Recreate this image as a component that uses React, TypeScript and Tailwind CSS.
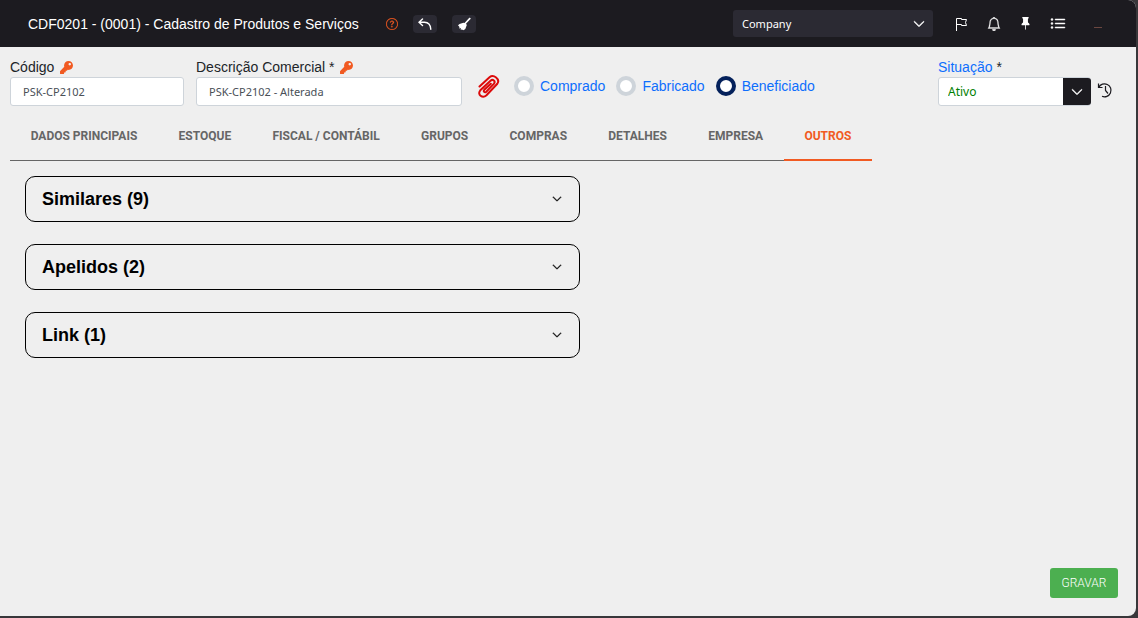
import { useState } from "react";
import { BsBell, BsChevronDown, BsListUl, BsPinFill, BsQuestionCircle } from "react-icons/bs";
import { FaKey } from "react-icons/fa";

const TABS = ["DADOS PRINCIPAIS", "ESTOQUE", "FISCAL / CONTÁBIL", "GRUPOS", "COMPRAS", "DETALHES", "EMPRESA", "OUTROS"];
const ORIGINS = ["Comprado", "Fabricado", "Beneficiado"];
const SECTIONS = ["Similares (9)", "Apelidos (2)", "Link (1)"];

function UndoIcon() {
  return (
    <svg width="14" height="12" viewBox="0 0 14 12" fill="none" stroke="currentColor" strokeWidth="1.400" strokeLinecap="round">
      <path d="M4.500 1 1 4.300l3.500 3.200M1 4.300h5.500c4 0 6 3 6.300 7" />
    </svg>
  );
}

function BroomIcon() {
  return (
    <svg width="14" height="14" viewBox="0 0 14 14" fill="currentColor">
      <path d="M12.300.8a.9.9 0 0 1 1.200 1.300L9 6.700l.8 1.200-1.500 4L6.500 13.300 1 8.500 2.500 7l4-1.300 1 .2z" />
      <path d="m1.500 7.500 5.300 5.300-3.300-.3L4 11l-2 .5.7-1.700z" />
    </svg>
  );
}

function FlagIcon() {
  return (
    <svg width="14" height="14" viewBox="0 0 14 14" fill="none" stroke="currentColor">
      <path d="M1.500 14V1.500h5v1h5L10.500 5.500l1 3H6.500v-1h-5" />
    </svg>
  );
}

function ClipIcon() {
  return (
    <svg width="22" height="23" viewBox="0 0 22 23" fill="none" stroke="#dc0a0a" strokeWidth="2" strokeLinecap="round">
      <path d="M1.500 11.500 11.500 2.300C15.500-1 22.500 4 19.300 8.800L8.500 20.300C4.500 24-1.200 19.500 2.300 15.300L12.500 5.700c2.500-2 5.300.5 3.500 3L8.300 16.700c-1.800 1.500-3.300-.3-2-1.900L12.800 8.800" />
    </svg>
  );
}

function HistoryIcon() {
  return (
    <svg width="16" height="16" viewBox="0 0 16 16" fill="none" stroke="#1c1b20" strokeWidth="1.200">
      <path d="M1.500 1.500v4h4M1.700 5.400A6.500 6.500 0 1 1 5 14.300M8.500 4v4.500l2.500 3" />
    </svg>
  );
}

export default function App() {
  const [tab, setTab] = useState("OUTROS");
  const [origin, setOrigin] = useState("Beneficiado");
  return (
    <div className="min-h-screen bg-[#38373a] pr-[2px] pb-[2px] font-['Liberation_Sans',sans-serif] text-sm text-[#212529]">
      <div className="flex min-h-[calc(100vh-2px)] flex-col overflow-hidden rounded-r-lg bg-[#efefef]">
        <header className="flex h-[47px] shrink-0 items-center bg-[#1c1b20] pr-[30px] pl-7 text-white">
          <h1>CDF0201 - (0001) - Cadastro de Produtos e Serviços</h1>
          <button aria-label="Ajuda" className="ml-[27px] text-[#f15a22]"><BsQuestionCircle size={12} strokeWidth={0.3} /></button>
          <button aria-label="Desfazer" className="ml-[15px] flex h-[18px] w-6 items-center justify-center rounded-sm bg-[#2b2a33]"><UndoIcon /></button>
          <button aria-label="Limpar" className="ml-[15px] flex h-[18px] w-6 items-center justify-center rounded-sm bg-[#2b2a33]"><BroomIcon /></button>
          <div className="relative ml-auto w-[200px]">
            <select aria-label="Empresa" className="h-[27px] w-full appearance-none rounded-[3px] bg-[#2b2a33] pl-[9px] font-['Noto_Sans',sans-serif] text-[11px] text-white">
              <option>Company</option>
            </select>
            <BsChevronDown size={12} strokeWidth={1} className="pointer-events-none absolute top-2 right-2" />
          </div>
          <nav className="ml-[22px] flex items-center gap-[18px]">
            <button aria-label="Marcadores"><FlagIcon /></button>
            <button aria-label="Notificações"><BsBell size={14} strokeWidth={0.3} /></button>
            <button aria-label="Fixar"><BsPinFill size={13} /></button>
            <button aria-label="Lista"><BsListUl size={16} strokeWidth={0.5} /></button>
            <button aria-label="Minimizar" className="ml-[6px] flex h-4 w-4 items-end justify-center pb-1"><span className="h-px w-2 bg-[#6b4740]" /></button>
          </nav>
        </header>

        <main className="flex grow flex-col px-[10px]">
          <form className="flex items-start pt-[11px] pr-[13px]">
            <div className="w-[174px]">
              <label htmlFor="codigo" className="mb-px flex h-[18px] items-center gap-[6px]">Código <FaKey size={13} className="text-[#f15a22]" /></label>
              <input id="codigo" defaultValue="PSK-CP2102" className="h-[29px] w-full rounded-[3px] border border-[#ced4da] bg-white px-3 font-['Noto_Sans',sans-serif] text-[11px] text-[#495057]" />
            </div>
            <div className="ml-3 w-[266px]">
              <label htmlFor="descricao" className="mb-px flex h-[18px] items-center gap-[6px]">Descrição Comercial * <FaKey size={13} className="text-[#f15a22]" /></label>
              <input id="descricao" defaultValue="PSK-CP2102 - Alterada" className="h-[29px] w-full rounded-[3px] border border-[#ced4da] bg-white px-3 font-['Noto_Sans',sans-serif] text-[11px] text-[#495057]" />
            </div>
            <button type="button" aria-label="Anexos" className="mt-[17px] ml-4"><ClipIcon /></button>
            <fieldset className="mt-[18px] ml-[14px] flex gap-[11px]">
              {ORIGINS.map((o) => (
                <label key={o} className="flex items-center gap-[6px] text-[#0d6efd]">
                  <input type="radio" name="origem" checked={origin === o} onChange={() => setOrigin(o)} className="h-5 w-5 appearance-none rounded-full border-4 border-[#ced4da] bg-white checked:border-[#04215b]" />
                  {o}
                </label>
              ))}
            </fieldset>
            <div className="ml-auto w-[153px]">
              <label htmlFor="situacao" className="mb-px flex h-[18px] items-center text-[#0d6efd]">Situação<span className="ml-1 text-[#212529]">*</span></label>
              <div className="relative">
                <select id="situacao" className="h-[29px] w-full appearance-none rounded-[3px] border border-[#ced4da] bg-white pl-[9px] font-['Noto_Sans',sans-serif] text-xs text-[#008000]">
                  <option>Ativo</option>
                </select>
                <span className="pointer-events-none absolute top-px right-0 flex h-[27px] w-7 items-center justify-center rounded-r-[3px] bg-[#1c1b20] text-white"><BsChevronDown size={12} strokeWidth={1} /></span>
              </div>
            </div>
            <button type="button" aria-label="Histórico" className="mt-6 ml-[6px]"><HistoryIcon /></button>
          </form>

          <div role="tablist" className="mt-[5px] flex h-[50px] w-[862px] max-w-full">
            {TABS.map((t) => (
              <button key={t} role="tab" aria-selected={t === tab} onClick={() => setTab(t)} className="grow border-b border-[#666666] px-[19px] font-['Roboto',sans-serif] text-xs font-bold whitespace-nowrap text-[#666666] aria-selected:border-b-2 aria-selected:border-[#f15a22] aria-selected:pt-px aria-selected:text-[#f15a22]">
                {t}
              </button>
            ))}
          </div>

          <section className="mt-[15px] ml-[15px] flex w-[555px] max-w-full flex-col gap-[22px]">
            {SECTIONS.map((s) => (
              <button key={s} aria-expanded={false} className="flex h-[46px] items-center justify-between rounded-[10px] border border-black px-4 text-left text-lg font-bold text-black">
                {s}
                <BsChevronDown size={10} strokeWidth={1} className="mr-px" />
              </button>
            ))}
          </section>

          <button className="mt-auto mr-2 mb-[18px] h-[30px] w-[68px] self-end rounded-[3px] bg-[#4caf50] font-['Roboto',sans-serif] text-xs font-light text-white">GRAVAR</button>
        </main>
      </div>
    </div>
  );
}
